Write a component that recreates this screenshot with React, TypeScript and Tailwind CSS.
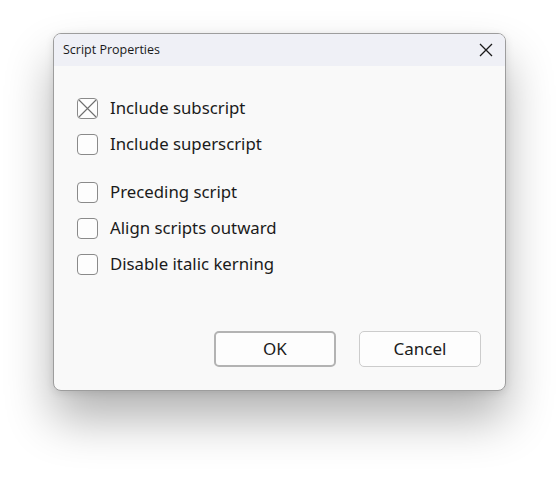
import React from 'react';

const options = [
  { label: 'Include subscript', checked: true },
  { label: 'Include superscript', checked: false },
  { label: 'Preceding script', checked: false, gapBefore: true },
  { label: 'Align scripts outward', checked: false },
  { label: 'Disable italic kerning', checked: false },
];

const Checkbox: React.FC<{ checked: boolean }> = ({ checked }) => (
  <div className="w-[21px] h-[21px] rounded-[4px] border border-[#8a8a8a] bg-[#fdfdfd] flex items-center justify-center shrink-0">
    {checked && (
      <svg width="19" height="19" viewBox="0 0 19 19">
        <path d="M1 1 L18 18 M18 1 L1 18" stroke="#6f6f6f" strokeWidth="1.1" />
      </svg>
    )}
  </div>
);

export default function App() {
  return (
    <div className="w-[560px] h-[482px] bg-white pt-[33px] pl-[53px]" style={{ fontFamily: '"Noto Sans", sans-serif' }}>
      <div className="w-[453px] h-[358px] rounded-[8px] border border-[#9d9d9d] bg-[#f9f9f9] overflow-hidden flex flex-col shadow-[0_28px_48px_rgba(0,0,0,0.3),0_2px_8px_rgba(0,0,0,0.1)]">
        {/* Title bar */}
        <div className="h-[32px] bg-[#eff0f6] flex items-center justify-between pl-[9px] pr-[12px] shrink-0">
          <span className="text-[12.5px] text-[#1a1a1a]" style={{ fontFamily: '"Open Sans", "Noto Sans", sans-serif' }}>Script Properties</span>
          <svg width="14" height="14" viewBox="0 0 14 14">
            <path d="M1 1 L13 13 M13 1 L1 13" stroke="#1a1a1a" strokeWidth="1.3" />
          </svg>
        </div>

        {/* Body */}
        <div className="flex-1 flex flex-col pt-[24px] pl-[23px] pr-[24px] pb-[23px]">
          <div className="flex flex-col">
            {options.map((o, i) => (
              <div key={i} className={`h-[36px] flex items-center gap-[12px] ${o.gapBefore ? 'mt-[12px]' : ''}`}>
                <Checkbox checked={o.checked} />
                <span className="text-[16.8px] text-[#1b1b1b]">{o.label}</span>
              </div>
            ))}
          </div>

          <div className="mt-auto flex justify-end gap-[23px]">
            <button className="w-[122px] h-[36px] rounded-[5px] border-2 border-[#b3b3b3] bg-[#fdfdfd] text-[17px] text-[#1b1b1b]">OK</button>
            <button className="w-[122px] h-[36px] rounded-[5px] border border-[#cccccc] bg-[#fdfdfd] text-[17px] text-[#1b1b1b]">Cancel</button>
          </div>
        </div>
      </div>
    </div>
  );
}
